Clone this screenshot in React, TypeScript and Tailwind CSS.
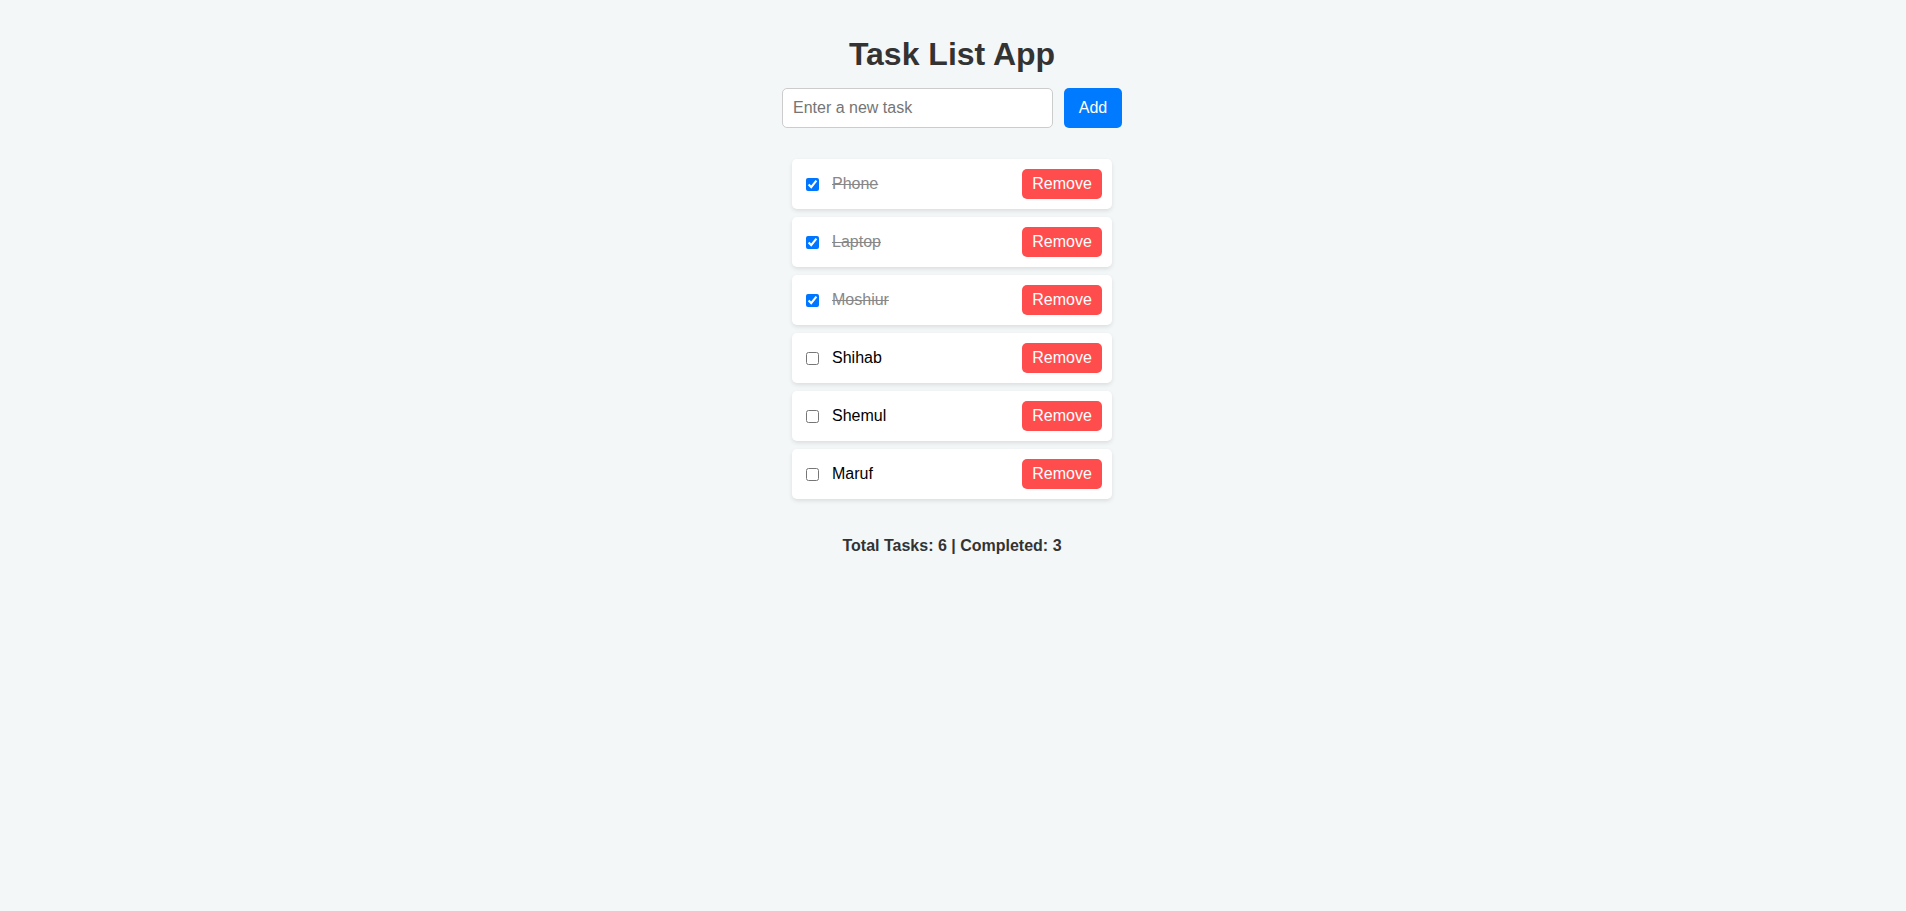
import { useState } from "react"

type Task = { id: number; text: string; done: boolean }

const initial: Task[] = [
  { id: 1, text: "Phone", done: true },
  { id: 2, text: "Laptop", done: true },
  { id: 3, text: "Moshiur", done: true },
  { id: 4, text: "Shihab", done: false },
  { id: 5, text: "Shemul", done: false },
  { id: 6, text: "Maruf", done: false },
]

export default function App() {
  const [tasks, setTasks] = useState<Task[]>(initial)
  const [text, setText] = useState("")

  const addTask = () => {
    if (!text.trim()) return
    setTasks([...tasks, { id: Date.now(), text: text.trim(), done: false }])
    setText("")
  }

  const toggle = (id: number) =>
    setTasks(tasks.map((t) => (t.id === id ? { ...t, done: !t.done } : t)))

  const remove = (id: number) => setTasks(tasks.filter((t) => t.id !== id))

  const completed = tasks.filter((t) => t.done).length

  return (
    <div className="min-h-screen bg-[#f4f7f8] font-['Liberation_Sans',Arial,sans-serif] text-[16px]">
      <div className="flex flex-col items-center pt-[36px] pr-[2px]">
        <h1 className="text-[32px] leading-[37px] font-bold text-[#333]">Task List App</h1>
        <div className="flex gap-[11px] mt-[15px]">
          <input
            type="text"
            value={text}
            onChange={(e) => setText(e.target.value)}
            placeholder="Enter a new task"
            className="w-[271px] h-[40px] px-[10px] border border-[#ccc] rounded-[5px] bg-white text-[16px] outline-none placeholder:text-[#757575]"
          />
          <button
            onClick={addTask}
            className="w-[58px] h-[40px] rounded-[5px] bg-[#007bff] text-white text-[16px]"
          >
            Add
          </button>
        </div>

        <ul className="flex flex-col gap-[8px] mt-[31px] w-[320px]">
          {tasks.map((task) => (
            <li
              key={task.id}
              className="flex items-center h-[50px] pl-[14px] pr-[10px] bg-white rounded-[5px] shadow-[0_2px_4px_rgba(0,0,0,0.1)]"
            >
              <input
                type="checkbox"
                checked={task.done}
                onChange={() => toggle(task.id)}
                className="w-[13px] h-[13px]"
              />
              <span
                className={
                  task.done
                    ? "ml-[13px] flex-1 text-[#888] line-through"
                    : "ml-[13px] flex-1 text-black"
                }
              >
                {task.text}
              </span>
              <button
                onClick={() => remove(task.id)}
                className="w-[80px] h-[30px] rounded-[5px] bg-[#ff4d4d] text-white text-[16px]"
              >
                Remove
              </button>
            </li>
          ))}
        </ul>

        <p className="mt-[38px] font-bold text-[#333] leading-[18px]">
          Total Tasks: {tasks.length} | Completed: {completed}
        </p>
      </div>
    </div>
  )
}
